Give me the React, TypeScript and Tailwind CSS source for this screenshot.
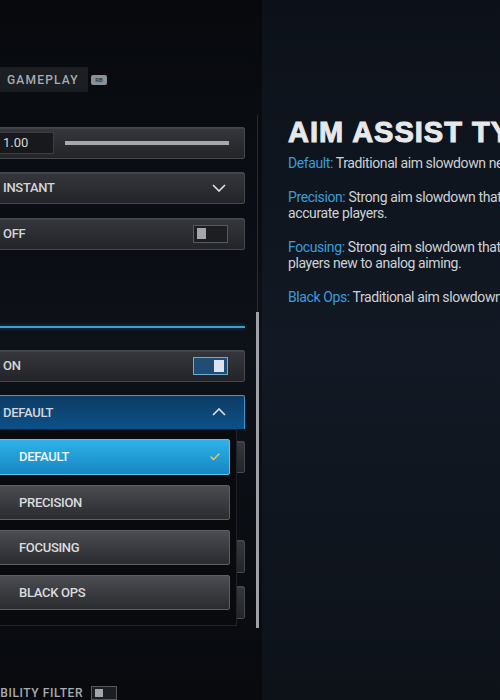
import React from "react";
import { Check } from "lucide-react";

const rowBase =
  "h-[34px] flex items-center rounded-[2px] border border-[#45484d] bg-gradient-to-b from-[#35373c] to-[#222428] shadow-[inset_0_1px_0_rgba(255,255,255,0.06)]";

const label =
  "text-[13px] font-medium uppercase tracking-[-0.3px] text-[#d3d6d9] leading-none";

function Chevron({ up }: { up?: boolean }) {
  return (
    <svg width="14" height="8" viewBox="0 0 14 8" className="text-[#dfe2e5]">
      <polyline
        points={up ? "1,7 7,1 13,7" : "1,1 7,7 13,1"}
        fill="none"
        stroke="currentColor"
        strokeWidth="1.6"
      />
    </svg>
  );
}

function Toggle({ on }: { on?: boolean }) {
  return (
    <div
      className={
        on
          ? "w-[35px] h-[18px] border border-[#6ea9cf] bg-[#1f4d73] flex items-center justify-end pr-[3px]"
          : "w-[35px] h-[18px] border border-[#55585d] bg-[#1c1e22] flex items-center pl-[3px]"
      }
    >
      <div
        className={
          on ? "w-[10px] h-[12px] bg-[#dfe3ef]" : "w-[9px] h-[11px] bg-[#a3a6aa]"
        }
      />
    </div>
  );
}

const options = ["Default", "Precision", "Focusing", "Black Ops"];

function Dropdown() {
  return (
    <div className="absolute left-0 top-full w-[247px] h-[197px] bg-[#090a0d] border border-[#1f2226] pt-[9px] flex flex-col gap-[10px] z-10">
      {options.map((opt, i) =>
        i === 0 ? (
          <div
            key={opt}
            className="w-[239px] h-[36px] flex items-center justify-between pl-[27px] pr-[8px] rounded-[2px] border border-[#5ec4ee] bg-gradient-to-b from-[#2fb2e8] to-[#1587c3]"
          >
            <span className={`${label} text-[#eef6fb]`}>{opt}</span>
            <Check size={12} strokeWidth={3} color="#e9c65e" />
          </div>
        ) : (
          <div
            key={opt}
            className="w-[239px] h-[35px] flex items-center pl-[27px] rounded-[2px] border border-[#5c5e63] bg-gradient-to-b from-[#4c4d52] to-[#2a2b2f]"
          >
            <span className={`${label} text-[#dadcde]`}>{opt}</span>
          </div>
        )
      )}
    </div>
  );
}

function SettingsList() {
  return (
    <div className="ml-[-10px] w-[255px] flex flex-col pt-[67px]">
      <div className="flex items-center">
        <div className="h-[25px] w-[98px] bg-[#1b1e23] pl-[17px] flex items-center">
          <span className="text-[12px] font-medium tracking-[1.2px] text-[#a8acb0]">
            GAMEPLAY
          </span>
        </div>
        <div className="ml-[3px] w-[16px] h-[10px] rounded-[2px] bg-[#8c8f93] flex items-center justify-center">
          <span className="text-[6px] font-bold text-[#3a3c40] leading-none">RB</span>
        </div>
      </div>

      <div className={`${rowBase} mt-[35px]`}>
        <div className="ml-[2px] w-[61px] h-[22px] bg-[#17191d] border border-[#3b3e42] flex items-center pl-[9px]">
          <span className="text-[13px] text-[#d3d6d9] leading-none">1.00</span>
        </div>
        <div className="ml-[11px] w-[164px] h-[4px] bg-[#a5a8ac]" />
      </div>

      <div className={`${rowBase} mt-[13px] justify-between pl-[12px] pr-[18px]`}>
        <span className={label}>Instant</span>
        <Chevron />
      </div>

      <div className={`${rowBase} mt-[14px] justify-between pl-[12px] pr-[16px]`}>
        <span className={label}>Off</span>
        <Toggle />
      </div>

      <div className="mt-[76px] h-[2px] bg-[#3f9bd2] shadow-[0_0_4px_rgba(63,155,210,0.5)]" />

      <div className={`${rowBase} mt-[22px] justify-between pl-[12px] pr-[16px]`}>
        <span className={label}>On</span>
        <Toggle on />
      </div>

      <div className="relative mt-[13px]">
        <div className="h-[34px] flex items-center justify-between pl-[12px] pr-[18px] rounded-t-[2px] border border-b-0 border-[#3d95d4] bg-gradient-to-b from-[#0d3c63] to-[#0b5189]">
          <span className={label}>Default</span>
          <Chevron up />
        </div>
        <Dropdown />
      </div>

      <div className={`${rowBase} mt-[12px] h-[35px]`} />
      <div className={`${rowBase} mt-[67px] h-[35px]`} />
      <div className={`${rowBase} mt-[13px] h-[35px]`} />

      <div className="mt-[67px] flex items-center">
        <span className="ml-[-14px] text-[12px] font-medium tracking-[0.6px] text-[#a8acb0] leading-none">
          VISIBILITY FILTER
        </span>
        <div className="ml-[8px] w-[26px] h-[14px] border border-[#55585d] bg-[#1c1e22] pl-[3px] pt-[2px]">
          <div className="w-[8px] h-[8px] bg-[#a3a6aa]" />
        </div>
      </div>
    </div>
  );
}

function Scrollbar() {
  return (
    <div className="ml-[11px] w-[3px] flex flex-col items-center pt-[115px]">
      <div className="w-[1px] h-[197px] bg-[#262b33]" />
      <div className="w-[3px] h-[316px] bg-[#9ea2a8]" />
    </div>
  );
}

function InfoPanel() {
  const para = "mb-[18px]";
  return (
    <div className="flex-1 pl-[26px] pt-[118px] whitespace-nowrap font-['Roboto',sans-serif]">
      <h1 className="font-['Liberation_Sans',Arial,sans-serif] text-[29px] leading-[29px] font-bold tracking-[1px] text-[#e6e8ea] [-webkit-text-stroke:1px_#e6e8ea]">
        AIM ASSIST TYPE
      </h1>
      <div className="mt-[8px] text-[14px] leading-[16px] tracking-[-0.4px] text-[#cdd1d6]">
        <p className={para}>
          <span className="text-[#3b9dd8]">Default:</span> Traditional aim slowdown near targets.
        </p>
        <p className={para}>
          <span className="text-[#3b9dd8]">Precision:</span> Strong aim slowdown that is best for
          <br />
          accurate players.
        </p>
        <p className={para}>
          <span className="text-[#3b9dd8]">Focusing:</span> Strong aim slowdown that is best for
          <br />
          players new to analog aiming.
        </p>
        <p className={para}>
          <span className="text-[#3b9dd8]">Black Ops:</span> Traditional aim slowdown with
        </p>
      </div>
    </div>
  );
}

export default function App() {
  return (
    <div className="relative w-[500px] h-[700px] overflow-hidden flex bg-gradient-to-b from-[#07090d] via-[#0d1118] to-[#080a0e] font-['Roboto',sans-serif]">
      <div className="w-[262px] shrink-0 flex">
        <SettingsList />
        <Scrollbar />
      </div>
      <div className="flex-1 flex bg-gradient-to-b from-[#0c1119] via-[#121924] to-[#0d1219]">
        <InfoPanel />
      </div>
    </div>
  );
}
